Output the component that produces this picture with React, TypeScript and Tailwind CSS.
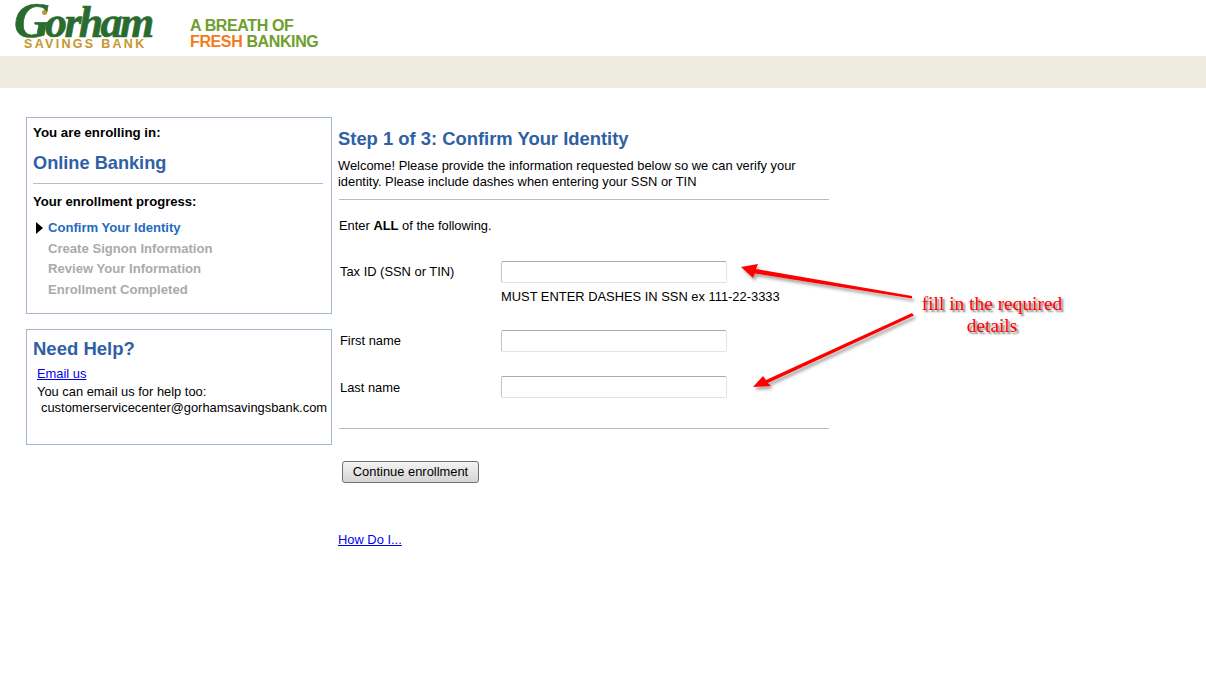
export default function App() {
  const font = "font-['Liberation_Sans',Arial,sans-serif]";
  const field = "block h-[22px] w-[226px] rounded-[2px] border border-[#dfe3ea] border-t-[#aaaaaa] border-l-[#c4c4c4] bg-white";
  return (
    <div className={`relative w-[1206px] h-[681px] overflow-hidden bg-white text-black text-[12.9px] leading-[16px] ${font}`}>
      <header className="flex h-[56px] items-start">
        <div className="ml-[14px] w-[176px] shrink-0">
          <div className="relative mt-[4px] flex h-[32px] w-[142px] items-baseline font-['Liberation_Serif',serif] italic font-bold text-[#2a6b2f] text-[44px] leading-[32px] tracking-[-2.7px] whitespace-nowrap [-webkit-text-stroke:0.6px_#2a6b2f]">
            <span className="text-[50px] tracking-[-5px]">G</span>orham
            <span className="absolute left-[28px] top-[6px] h-[5px] w-[5px] rounded-full bg-[#c5962c]" />
          </div>
          <div className="ml-[10px] mt-[2px] text-[12.5px] leading-[12px] font-bold tracking-[2.3px] text-[#c5962c] whitespace-nowrap">SAVINGS BANK</div>
        </div>
        <div className="mt-[18px] text-[16px] leading-[16px] font-bold tracking-[-0.38px] text-[#6f9e2e] whitespace-nowrap">
          <div>A BREATH OF</div>
          <div><span className="text-[#f47a20]">FRESH</span> BANKING</div>
        </div>
      </header>
      <div className="h-[32px] bg-[#edeae0]" />

      <main className="flex pt-[29px] pl-[26px]">
        <aside className="w-[306px] shrink-0">
          <section className="h-[197px] border border-[#a3b8cc] px-[6px] pt-[7px]">
            <div className="text-[13.3px] leading-[16px] font-bold">You are enrolling in:</div>
            <div className="mt-[10px] text-[18.2px] leading-[24px] font-bold text-[#2f5fa5]">Online Banking</div>
            <div className="mt-[8px] mr-[2px] border-t border-[#bbbbbb]" />
            <div className="mt-[10px] text-[13.1px] leading-[16px] font-bold">Your enrollment progress:</div>
            <ul className="mt-[8px] text-[13.1px] font-bold leading-[20.6px] text-[#aaaaaa]">
              <li className="relative pl-[15px] text-[#1f6bbf]">
                <span className="absolute left-[3px] top-[4px] h-0 w-0 border-y-[6px] border-l-[7px] border-y-transparent border-l-black" />
                Confirm Your Identity
              </li>
              <li className="pl-[15px]">Create Signon Information</li>
              <li className="pl-[15px]">Review Your Information</li>
              <li className="pl-[15px]">Enrollment Completed</li>
            </ul>
          </section>
          <section className="mt-[15px] h-[116px] border border-[#a3b8cc] px-[6px] pt-[7px] leading-[17px]">
            <div className="text-[18.5px] leading-[24px] font-bold text-[#2f5fa5]">Need Help?</div>
            <div className="ml-[4px] mt-[4px]"><a className="text-[#0000ee] underline" href="#">Email us</a></div>
            <div className="ml-[4px] mt-[1px]">You can email us for help too:</div>
            <div className="ml-[8px] -mt-[1px] whitespace-nowrap">customerservicecenter@gorhamsavingsbank.com</div>
          </section>
        </aside>

        <div className="ml-[6px] w-[491px]">
          <h1 className="mt-[10px] text-[18.4px] leading-[24px] font-bold text-[#2f5fa5]">Step 1 of 3: Confirm Your Identity</h1>
          <p className="mt-[7px] w-[480px]">Welcome! Please provide the information requested below so we can verify your identity. Please include dashes when entering your SSN or TIN</p>
          <div className="mt-[9px] ml-[1px] border-t border-[#bbbbbb]" />
          <p className="mt-[18px] ml-[1px]">Enter <b>ALL</b> of the following.</p>
          <div className="mt-[27px] ml-[2px] flex">
            <label className="w-[161px] pt-[3px]">Tax ID (SSN or TIN)</label>
            <div>
              <input className={field} />
              <div className="mt-[6px] whitespace-nowrap">MUST ENTER DASHES IN SSN ex 111-22-3333</div>
            </div>
          </div>
          <div className="mt-[25px] ml-[2px] flex">
            <label className="w-[161px] pt-[3px]">First name</label>
            <input className={field} />
          </div>
          <div className="mt-[24px] ml-[2px] flex">
            <label className="w-[161px] pt-[4px]">Last name</label>
            <input className={field} />
          </div>
          <div className="mt-[30px] ml-[1px] border-t border-[#bbbbbb]" />
          <button className="mt-[32px] ml-[4px] block h-[22px] w-[137px] rounded-[3px] border border-[#707070] bg-gradient-to-b from-[#f4f4f4] to-[#d4d4d4] text-[12.9px] leading-[16px] text-black">Continue enrollment</button>
          <a className="mt-[49px] block w-fit text-[#0000ee] underline" href="#">How Do I...</a>
        </div>
      </main>

      <svg className="absolute left-0 top-0 pointer-events-none" width="1206" height="681" viewBox="0 0 1206 681">
        <defs>
          <filter id="s" x="-20%" y="-50%" width="140%" height="200%">
            <feDropShadow dx="2" dy="3" stdDeviation="1.5" floodColor="#555" floodOpacity="0.5" />
          </filter>
        </defs>
        <g filter="url(#s)" fill="#ff0000" stroke="none">
          <path d="M741 267 L758 264 L756 269 L912 296 L912 298.5 L755 273.5 L753 278 Z" />
          <path d="M753 387 L763 376 L766 380 L912 313 L914 315.5 L768 383 L771 386 Z" />
        </g>
      </svg>
      <div className="absolute left-[912px] top-[293px] w-[160px] text-center font-['Liberation_Serif',serif] text-[19.4px] leading-[22px] text-[#ff0000] [text-shadow:2px_2px_2px_#777]">
        fill in the required<br />details
      </div>
    </div>
  );
}
